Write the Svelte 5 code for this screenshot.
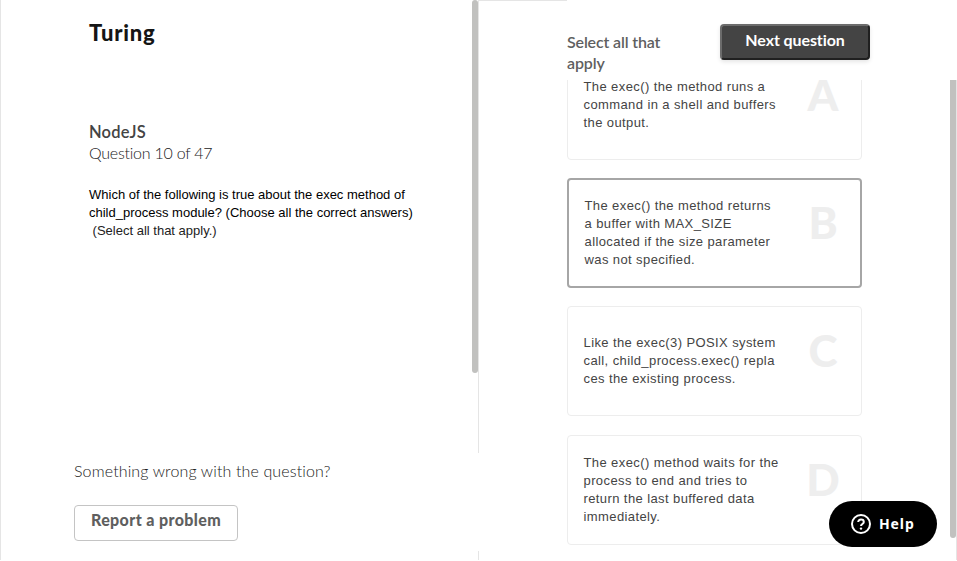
<script>
  const options = [
    { letter: 'A', lines: ['The exec() the method runs a', 'command in a shell and buffers', 'the output.'] },
    { letter: 'B', selected: true, lines: ['The exec() the method returns', 'a buffer with MAX_SIZE', 'allocated if the size parameter', 'was not specified.'] },
    { letter: 'C', lines: ['Like the exec(3) POSIX system', 'call, child_process.exec() repla', 'ces the existing process.'] },
    { letter: 'D', lines: ['The exec() method waits for the', 'process to end and tries to', 'return the last buffered data', 'immediately.'] }
  ];
</script>

<main>
  <section class="question">
    <div class="body">
      <div class="content">
        <div class="logo"><span>Turing</span></div>
        <div class="topic"><span>NodeJS</span></div>
        <div class="progress"><span>Question 10 of 47</span></div>
        <p>Which of the following is true about the exec method of<br />child_process module? (Choose all the correct answers)<br /><span class="hint">&nbsp;(Select all that apply.)</span></p>
      </div>
      <div class="thumb"></div>
    </div>
    <footer>
      <div class="wrong"><span>Something wrong with the question?</span></div>
      <button class="report"><span>Report a problem</span></button>
    </footer>
    <div class="tail"></div>
  </section>

  <section class="answers">
    <header>
      <div class="select">Select all that<br />apply</div>
      <button class="next"><span>Next question</span></button>
    </header>
    <div class="scroll">
      <div class="list">
        {#each options as option}
          <div class="card" class:selected={option.selected}>
            <div class="text">
              {#each option.lines as line}<div>{line}</div>{/each}
            </div>
            <div class="letter">{option.letter}</div>
          </div>
        {/each}
      </div>
      <div class="thumb"></div>
    </div>
  </section>

  <button class="help">
    <svg width="20" height="20" viewBox="0 0 20 20" fill="none" stroke="#fff" stroke-width="2">
      <circle cx="10" cy="10" r="9" />
      <path d="M7.2 8.1C7.2 6.4 8.4 5.5 10 5.5s2.8 1 2.8 2.4c0 2.1-2.8 2-2.8 4.1" />
      <circle cx="10" cy="14.6" r="1.2" fill="#fff" stroke="none" />
    </svg>
    <span>Help</span>
  </button>
</main>

<style>
  :global(body) { margin: 0; background: #fff; }
  main {
    position: relative;
    display: flex;
    width: 957px;
    height: 561px;
    overflow: hidden;
    font-family: Lato, "Liberation Sans", sans-serif;
    color: #5f5f5f;
  }
  button { box-sizing: border-box; margin: 0; padding: 0; font-family: inherit; }
  span { white-space: nowrap; }
  .question {
    box-sizing: border-box;
    display: flex;
    flex-direction: column;
    width: 479px;
    height: 560px;
    border-left: 1px solid #e5e5e5;
  }
  .body {
    display: flex;
    justify-content: space-between;
    height: 453px;
    border-right: 1px solid #e5e5e5;
  }
  .content { padding: 19px 0 0 88px; }
  .logo { height: 102px; line-height: 27px; font-size: 22px; font-weight: 900; color: #151515; letter-spacing: 0.75px; }
  .topic { height: 21px; line-height: 23px; font-size: 16.5px; font-weight: 600; color: #444; letter-spacing: 0.2px; }
  .progress { height: 21px; line-height: 21px; font-size: 16px; font-weight: 300; color: #222; letter-spacing: -0.23px; }
  p { margin: 23px 0 0; font: 13px/18px "Liberation Sans", Arial, sans-serif; color: #000; white-space: nowrap; }
  .hint { color: #222; }
  .question .thumb { width: 6px; height: 373px; border-radius: 3px; background: #c1c1bf; }
  footer { height: 98px; padding-left: 73px; }
  .wrong { height: 52px; line-height: 36px; font-size: 16px; font-weight: 300; color: #222; letter-spacing: 0.13px; }
  .report {
    display: flex;
    justify-content: center;
    width: 164px;
    height: 36px;
    border: 1px solid #c4c4c4;
    border-radius: 4px;
    background: #fff;
    color: #5f5f5f;
    font-size: 16px;
    font-weight: 900;
    line-height: 28px;
    letter-spacing: 0.37px;
  }
  .tail { height: 9px; border-right: 1px solid #e5e5e5; }
  .answers { display: flex; flex-direction: column; width: 478px; height: 560px; }
  header {
    box-sizing: border-box;
    display: flex;
    justify-content: space-between;
    align-items: flex-start;
    height: 80px;
    padding: 24px 87px 0 88px;
    background: linear-gradient(#e5e5e5, #e5e5e5) 0 0 / 88px 1px no-repeat;
  }
  .select { padding-top: 7px; line-height: 21px; font-size: 16px; font-weight: 600; white-space: nowrap; letter-spacing: -0.15px; }
  .next {
    display: flex;
    justify-content: center;
    width: 150px;
    height: 36px;
    border: 2px solid;
    border-color: #6c6c6c #202020 #202020 #6c6c6c;
    border-radius: 4px;
    background: #444;
    box-shadow: 0 2px 4px rgba(0, 0, 0, 0.1);
    color: #fff;
    font-size: 16px;
    font-weight: 700;
    line-height: 27px;
    letter-spacing: -0.1px;
  }
  .scroll {
    box-sizing: border-box;
    display: flex;
    justify-content: space-between;
    height: 480px;
    padding-left: 88px;
    overflow: hidden;
    border-right: 1px solid #e5e5e5;
  }
  .scroll .thumb { width: 6px; height: 458px; border-radius: 0 0 3px 3px; background: #c1c1bf; }
  .list { display: flex; flex-direction: column; gap: 18px; margin-top: -30px; }
  .card {
    box-sizing: border-box;
    display: flex;
    flex: none;
    justify-content: space-between;
    align-items: center;
    width: 295px;
    height: 110px;
    padding: 0 12px 0 15.5px;
    border: 1px solid #ededed;
    border-radius: 4px;
    background: #fff;
  }
  .card.selected { border: 2px solid #a6a6a6; padding-right: 11px; }
  .card:last-child { margin-top: 1px; }
  .text { font: 13px/18px "Liberation Sans", Arial, sans-serif; letter-spacing: 0.4px; color: #444; white-space: nowrap; }
  .letter {
    width: 52px;
    margin-bottom: 22px;
    text-align: center;
    font-family: Lato, sans-serif;
    font-size: 44px;
    font-weight: 900;
    line-height: 44px;
    color: #eee;
  }
  .help {
    position: absolute;
    left: 829px;
    top: 501px;
    display: flex;
    align-items: center;
    gap: 8px;
    width: 108px;
    height: 46px;
    padding-left: 22px;
    border: 0;
    border-radius: 23px;
    background: #000;
    color: #fff;
    font: 700 14px/20px "Noto Sans", sans-serif;
    letter-spacing: 0.9px;
  }
</style>
